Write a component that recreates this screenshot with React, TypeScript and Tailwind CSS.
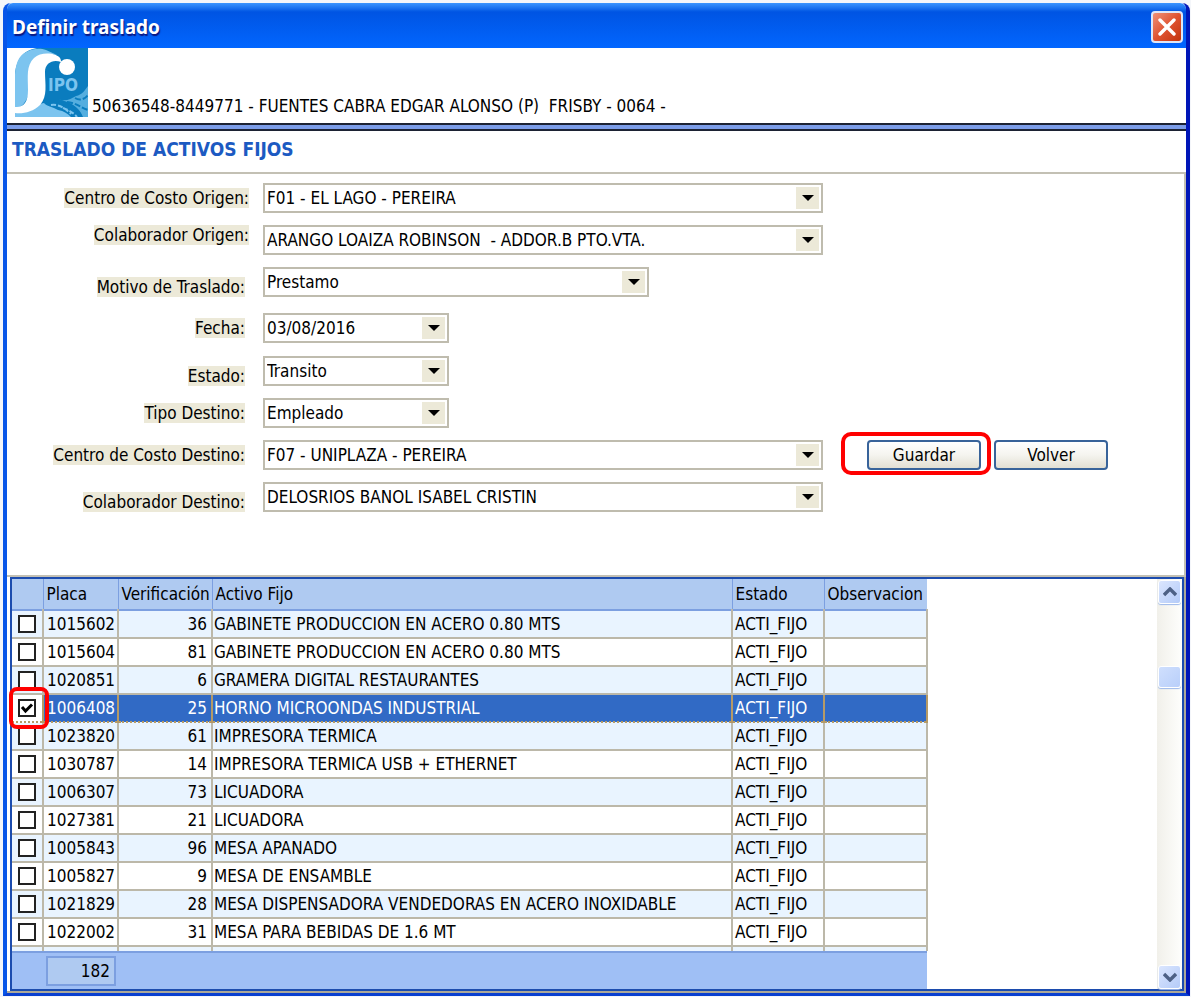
import React, { useState } from 'react';
import clsx from 'clsx';

interface Field {
  id: string;
  label: string;
  value: string;
  width: string;
  // separación respecto a la fila anterior
  gap: string;
  labelClass: string;
}

interface Activo {
  placa: string;
  verificacion: number;
  nombre: string;
}

const fields: Field[] = [
  { id: 'ccOrigen', label: 'Centro de Costo Origen:', value: 'F01 - EL LAGO - PEREIRA', width: 'w-[560px]', gap: '', labelClass: 'self-center' },
  { id: 'colOrigen', label: 'Colaborador Origen:', value: 'ARANGO LOAIZA ROBINSON \u00a0- ADDOR.B PTO.VTA.', width: 'w-[560px]', gap: 'mt-3', labelClass: 'self-start' },
  { id: 'motivo', label: 'Motivo de Traslado:', value: 'Prestamo', width: 'w-[386px]', gap: 'mt-3', labelClass: 'mr-1 self-end' },
  { id: 'fecha', label: 'Fecha:', value: '03/08/2016', width: 'w-[186px]', gap: 'mt-4', labelClass: 'mr-1 self-center' },
  { id: 'estado', label: 'Estado:', value: 'Transito', width: 'w-[186px]', gap: 'mt-[13px]', labelClass: 'mr-1 self-end' },
  { id: 'tipo', label: 'Tipo Destino:', value: 'Empleado', width: 'w-[186px]', gap: 'mt-3', labelClass: 'mr-1 self-center' },
  { id: 'ccDestino', label: 'Centro de Costo Destino:', value: 'F07 - UNIPLAZA - PEREIRA', width: 'w-[560px]', gap: 'mt-3', labelClass: 'mr-1 self-center' },
  { id: 'colDestino', label: 'Colaborador Destino:', value: 'DELOSRIOS BANOL ISABEL CRISTIN', width: 'w-[560px]', gap: 'mt-3', labelClass: 'mr-1 self-end' }
];

const activos: Activo[] = [
  { placa: '1015602', verificacion: 36, nombre: 'GABINETE PRODUCCION EN ACERO 0.80 MTS' },
  { placa: '1015604', verificacion: 81, nombre: 'GABINETE PRODUCCION EN ACERO 0.80 MTS' },
  { placa: '1020851', verificacion: 6, nombre: 'GRAMERA DIGITAL RESTAURANTES' },
  { placa: '1006408', verificacion: 25, nombre: 'HORNO MICROONDAS INDUSTRIAL' },
  { placa: '1023820', verificacion: 61, nombre: 'IMPRESORA TERMICA' },
  { placa: '1030787', verificacion: 14, nombre: 'IMPRESORA TERMICA USB + ETHERNET' },
  { placa: '1006307', verificacion: 73, nombre: 'LICUADORA' },
  { placa: '1027381', verificacion: 21, nombre: 'LICUADORA' },
  { placa: '1005843', verificacion: 96, nombre: 'MESA APANADO' },
  { placa: '1005827', verificacion: 9, nombre: 'MESA DE ENSAMBLE' },
  { placa: '1021829', verificacion: 28, nombre: 'MESA DISPENSADORA VENDEDORAS EN ACERO INOXIDABLE' },
  { placa: '1022002', verificacion: 31, nombre: 'MESA PARA BEBIDAS DE 1.6 MT' }
];

const columns = ['Placa', 'Verificación', 'Activo Fijo', 'Estado', 'Observacion'];

const Logo: React.FC = () => (
  <svg viewBox="0 0 73 69" className="h-[69px] w-[73px] shrink-0" role="img" aria-label="SIPO">
    <rect width="73" height="69" fill="#0a7cbe" />
    <path d="M0 0H22C10 2 2 9 0 26Z" fill="#fff" />
    <path d="M0 26C1 12 6 5 14 3L26 6C16 10 15 20 15 30C15 46 12 58 0 61Z" fill="#7cc4ef" />
    <path d="M12 4C17 0 26 0 31 2L42 7C34 5 28 6 22 9Z" fill="#7cc4ef" />
    <path d="M0 63L24 56L29 55C31 58 38 59 43 62C49 63 53 66 56 69H0Z" fill="#7cc4ef" />
    <path d="M0 59C8 60 13 55 13 42C13 28 11 18 19 10C26 3 42 5 45 10C46 12 46 13 46 14C38 11 30 15 30 24C30 36 33 48 25 57C18 64 8 66 0 65Z" fill="#fff" />
    <path d="M43 51C50 54 56 51 61 48C67 47 70 42 73 38V69H68C64 58 54 54 43 51Z" fill="#55aedf" />
    <path d="M46 56C54 55 60 58 66 67M52 54C62 55 66 60 73 62M60 50C65 53 70 51 73 47" stroke="#0a7cbe" strokeWidth="2" strokeDasharray="6 2" fill="none" />
    <path d="M36 57C44 56 50 60 56 66M48 60C54 62 60 66 62 69" stroke="#7cc4ef" strokeWidth="2" strokeDasharray="5 2" fill="none" />
    <circle cx="52" cy="19" r="8" fill="#fff" />
    <text x="33" y="43" fontSize="17" fontWeight="bold" fontFamily="'DejaVu Sans Condensed', sans-serif" fill="#7cc4ef">IPO</text>
  </svg>
);

const Chevron: React.FC<{ up?: boolean }> = ({ up }) => (
  <svg viewBox="0 0 14 10" className="h-[10px] w-[14px]" aria-hidden="true">
    <path d={up ? 'M1 8L7 2L13 8' : 'M1 2L7 8L13 2'} fill="none" stroke="#4d6185" strokeWidth="3.4" />
  </svg>
);

const ComboBox: React.FC<{ field: Field }> = ({ field }) => (
  <div className={clsx('relative h-[30px] shrink-0', field.width)}>
    <select
      id={field.id}
      defaultValue={field.value}
      className="block h-full w-full appearance-none border-2 border-[#bfbcae] bg-white pr-7 pl-[2px] text-black outline-none"
    >
      <option>{field.value}</option>
    </select>
    <span className="pointer-events-none absolute top-1 right-1 flex h-[22px] w-[23px] items-center justify-center bg-[#ece9d8]">
      <svg viewBox="0 0 12 6" className="h-[6px] w-[12px]" aria-hidden="true">
        <path d="M0 0H12L6 6Z" fill="#000" />
      </svg>
    </span>
  </div>
);

const FormButton: React.FC<{ children: React.ReactNode }> = ({ children }) => (
  <button
    type="button"
    className="h-[30px] w-[114px] rounded-[4px] border-2 border-[#38639a] bg-linear-to-b from-white via-[#f5f4ef] to-[#e2dfd3] text-black"
  >
    {children}
  </button>
);

const ScrollButton: React.FC<{ label: string; up?: boolean }> = ({ label, up }) => (
  <button
    type="button"
    aria-label={label}
    className="flex h-6 w-[23px] items-center justify-center rounded-[3px] border border-white bg-linear-to-br from-[#dbe6fe] to-[#b4cbf8] shadow-[0_1px_1px_#9db8ea]"
  >
    <Chevron up={up} />
  </button>
);

const App: React.FC = () => {
  const [selected, setSelected] = useState<string[]>(['1006408']);

  const toggle = (placa: string) => {
    setSelected(prev => (prev.includes(placa) ? prev.filter(p => p !== placa) : [...prev, placa]));
  };

  return (
    <div className="min-h-screen bg-[#f4f6fa] pt-[3px] pr-px pb-px pl-[3px] font-['DejaVu_Sans_Condensed','Noto_Sans',sans-serif] text-[17px] leading-5 text-black">
      <div className="rounded-t-lg border-x-4 border-b-3 border-r-[#0016b8] border-b-[#0a3fd0] border-l-[#0855e8] bg-white">
        <header className="flex h-[45px] items-center justify-between rounded-t-md bg-linear-to-b from-[#3b95ff] via-[#0054e3] via-20% to-[#0266ff] pt-[3px] pr-[3px] pl-[5px]">
          <h1 className="font-['Noto_Sans',sans-serif] text-[19px] font-bold text-white [text-shadow:1px_2px_1px_#0a1883]">
            Definir traslado
          </h1>
          <button
            type="button"
            aria-label="Cerrar"
            className="flex h-8 w-8 items-center justify-center rounded-[4px] border-2 border-[#dfe6f6] bg-linear-to-br from-[#ee9077] via-[#df5330] to-[#c23309]"
          >
            <svg viewBox="0 0 18 18" className="h-[18px] w-[18px]" aria-hidden="true">
              <path d="M2 2L16 16M16 2L2 16" stroke="#fff" strokeWidth="3.4" strokeLinecap="round" />
            </svg>
          </button>
        </header>

        <div className="flex h-[75px] items-start gap-1 pl-2">
          <Logo />
          <p className="mt-12 whitespace-pre">50636548-8449771 - FUENTES CABRA EDGAR ALONSO (P)  FRISBY - 0064 -</p>
        </div>
        <div className="h-2 border-y-2 border-[#1c2233] bg-[#7b9ce8]" />

        <div className="h-[43px] border-b-2 border-[#c3c0b4] px-[5px] pt-2">
          <h2 className="text-[19px] font-bold text-[#1c5ac2]">TRASLADO DE ACTIVOS FIJOS</h2>
        </div>

        <form className="h-[403px] border-r-2 border-b-2 border-[#c3c0b4] pt-[9px]">
          {fields.map(field => (
            <div key={field.id} className={clsx('flex h-[30px]', field.gap)}>
              <div className="mr-[14px] flex w-[242px] shrink-0 justify-end">
                <label htmlFor={field.id} className={clsx('bg-[#ece9d8] whitespace-nowrap', field.labelClass)}>
                  {field.label}
                </label>
              </div>
              <ComboBox field={field} />
              {field.id === 'ccDestino' && (
                <div className="ml-11 flex gap-[13px]">
                  <div className="relative">
                    <FormButton>Guardar</FormButton>
                    <span className="pointer-events-none absolute -top-2 -right-[10px] -bottom-[5px] -left-[26px] rounded-[10px] border-4 border-[#f00]" />
                  </div>
                  <FormButton>Volver</FormButton>
                </div>
              )}
            </div>
          ))}
        </form>

        <div className="border-r-2 border-b-2 border-[#aca899] pl-[3px]">
          <div className="flex justify-between border-2 border-[#1c4cae]">
            <div className="w-[915px]">
              <table className="w-[915px] table-fixed border-collapse">
                <colgroup>
                  <col className="w-[31px]" />
                  <col className="w-[75px]" />
                  <col className="w-[94px]" />
                  <col className="w-[520px]" />
                  <col className="w-[92px]" />
                  <col className="w-[103px]" />
                </colgroup>
                <thead>
                  <tr className="h-[31px] border-b-2 border-[#7c9fe0] bg-[#afcaf1]">
                    <th aria-label="Seleccionar" />
                    {columns.map(column => (
                      <th key={column} className="border-l border-[#7c9fe0] px-[3px] text-left font-normal whitespace-nowrap">
                        {column}
                      </th>
                    ))}
                  </tr>
                </thead>
                <tbody>
                  {activos.map((activo, i) => {
                    const checked = selected.includes(activo.placa);
                    const cell = clsx(
                      'border-r-2 border-b-2 p-0 whitespace-nowrap',
                      checked ? 'border-[#b59a66] [border-bottom-style:dotted]' : 'border-[#bcb8a9]'
                    );
                    return (
                      <tr
                        key={activo.placa}
                        className={clsx('h-7', checked ? 'bg-[#316ac5] text-white' : i % 2 === 0 ? 'bg-[#e9f4ff]' : 'bg-white')}
                      >
                        <td className={clsx(cell, 'relative', checked && 'bg-white')}>
                          <span className="relative mx-auto flex h-[18px] w-[18px]">
                            <input
                              type="checkbox"
                              aria-label={activo.placa}
                              checked={checked}
                              onChange={() => toggle(activo.placa)}
                              className="h-[18px] w-[18px] appearance-none border-2 border-[#222] bg-white"
                            />
                            {checked && (
                              <svg viewBox="0 0 18 18" className="pointer-events-none absolute inset-0" aria-hidden="true">
                                <path d="M4 8L7.500 12L14 5.500" fill="none" stroke="#000" strokeWidth="3" />
                              </svg>
                            )}
                          </span>
                          {activo.placa === '1006408' && (
                            <span className="pointer-events-none absolute -top-2 -right-[7px] -bottom-2 -left-[3px] z-10 rounded-lg border-4 border-[#f00]" />
                          )}
                        </td>
                        <td className={clsx(cell, 'pl-[3px]')}>{activo.placa}</td>
                        <td className={clsx(cell, 'pr-1 text-right')}>{activo.verificacion}</td>
                        <td className={clsx(cell, 'pl-px')}>{activo.nombre}</td>
                        <td className={clsx(cell, 'pl-[2px]')}>ACTI_FIJO</td>
                        <td className={cell} />
                      </tr>
                    );
                  })}
                  <tr className="h-[5px] bg-[#e9f4ff]">
                    {[0, 1, 2, 3, 4, 5].map(n => (
                      <td key={n} className="border-r-2 border-[#bcb8a9] p-0" />
                    ))}
                  </tr>
                </tbody>
              </table>
              <div className="flex h-[38px] items-center border-t-2 border-[#7c9fe0] bg-[#9fbff5] pl-[34px]">
                <output className="block h-[30px] w-[70px] border-2 border-[#7c9fe0] bg-[#afcaf1] pt-[3px] pr-1 text-right">182</output>
              </div>
            </div>

            <div className="flex w-[25px] flex-col items-center bg-linear-to-r from-[#f1f0ea] to-[#fefefc] pt-px">
              <ScrollButton label="Subir" up />
              <div className="flex-1 pt-[62px]">
                <div className="h-[22px] w-[23px] rounded-[3px] border border-white bg-linear-to-br from-[#cfdffd] to-[#b9cffa] shadow-[0_1px_1px_#9db8ea]" />
              </div>
              <ScrollButton label="Bajar" />
            </div>
          </div>
        </div>
      </div>
    </div>
  );
};

export default App;
